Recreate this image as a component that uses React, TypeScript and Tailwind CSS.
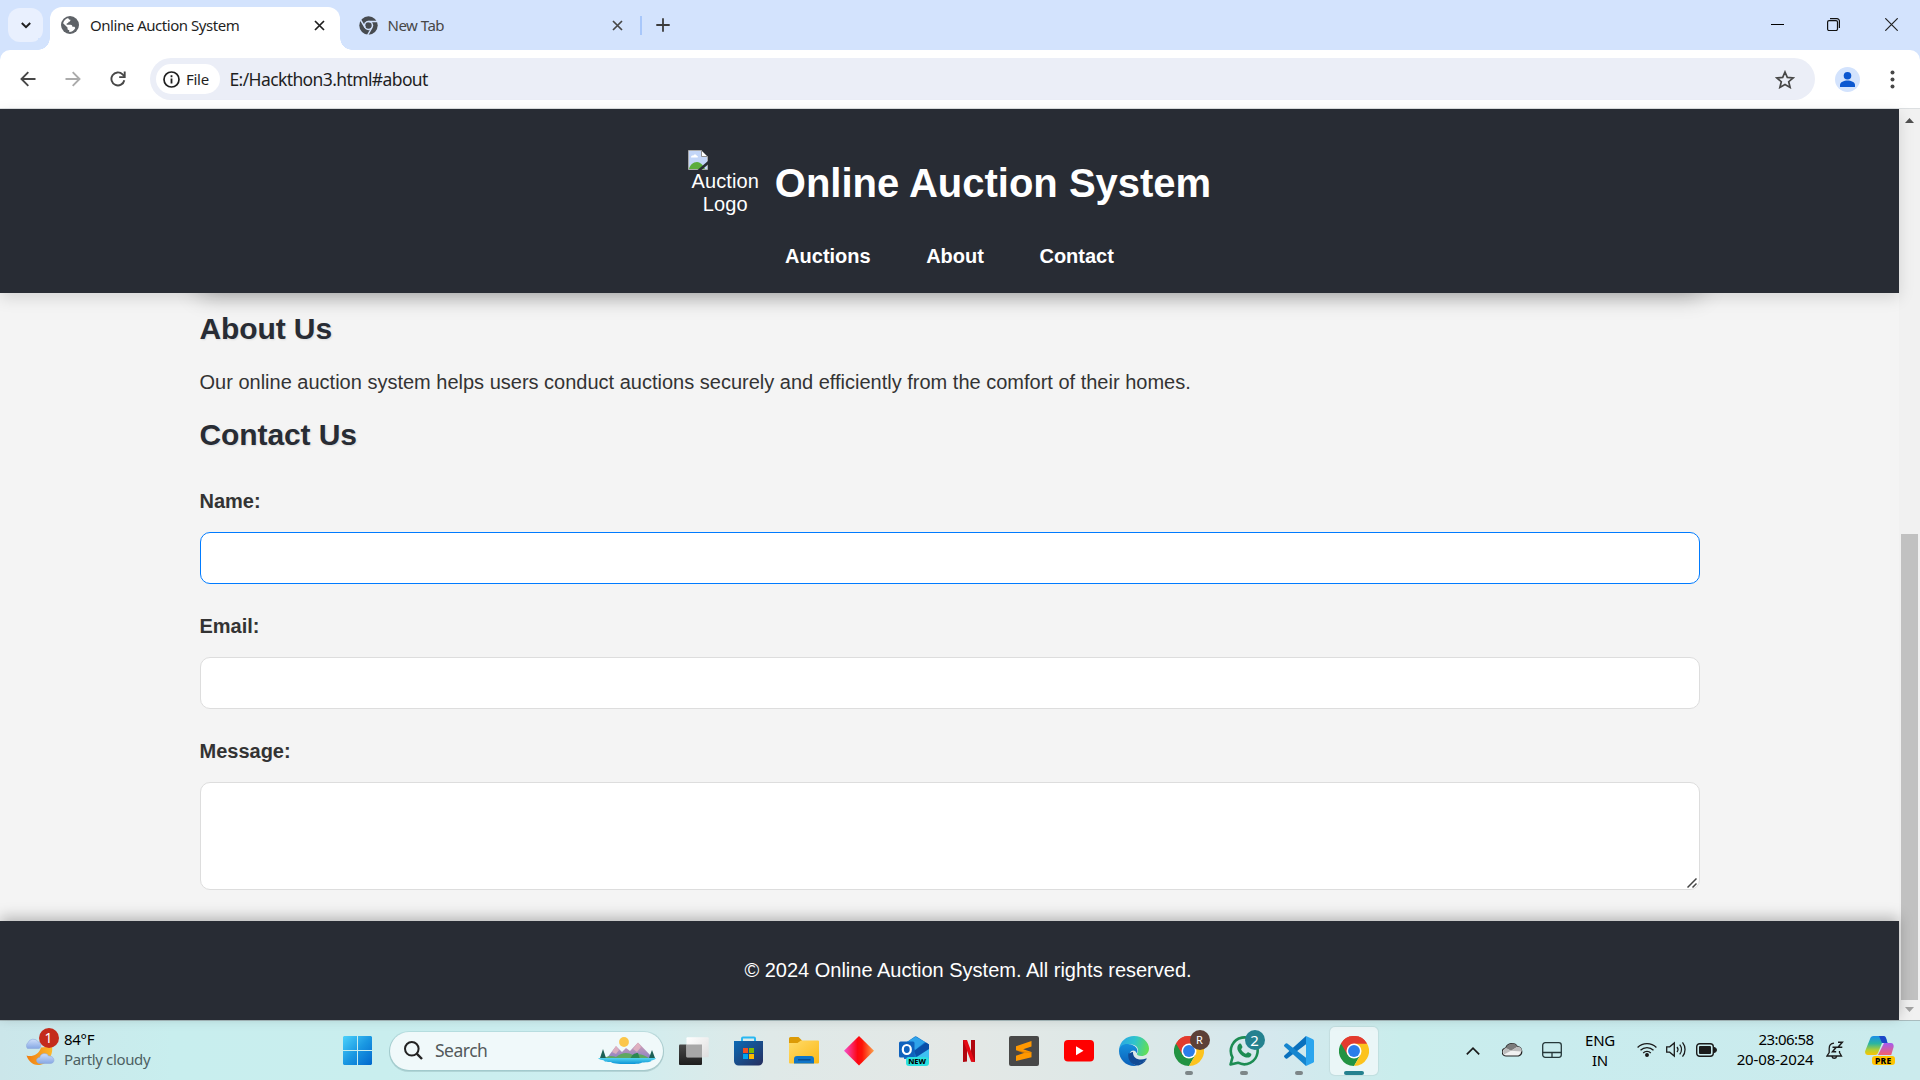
import type { ReactNode } from "react";

const UI = "font-['Noto_Sans','Open_Sans',sans-serif]";

/* ---------- Browser icons ---------- */

const CloseX = ({ color = "#1f1f1f" }: { color?: string }) => (
  <svg width="11" height="11" viewBox="0 0 11 11" fill="none" stroke={color} strokeWidth="1.7">
    <path d="M1 1l9 9M10 1l-9 9" />
  </svg>
);

const Globe = () => (
  <svg width="18" height="18" viewBox="0 0 18 18">
    <circle cx="9" cy="9" r="9" fill="#5f6368" />
    <path d="M7.2 1.9c.2 1.3 1 1.7 2.3 1.8-.1 1.3-.6 2-1.8 2.1-.3 1-1 1.6-2 1.7l-.1 1.3h3.9c1.3 0 1.9.8 1.9 1.900h1.300c1 0 1.600.6 1.500 1.600A7 7 0 0 1 8.200 16v-1.900c-1 0-1.700-.7-1.700-1.700v-.9L2.100 7.200A7.200 7.200 0 0 1 7.200 1.900z" fill="#fff" />
    <path d="M11.500 2.500c2.500 1 4.300 3.200 4.500 6-.8-1.300-1.900-1.500-3-1.600 0-1.200-.5-1.700-1.500-1.800z" fill="#5f6368" />
  </svg>
);

const ChromeMono = () => (
  <svg width="19" height="19" viewBox="0 0 19 19">
    <circle cx="9.500" cy="9.500" r="9.200" fill="#474b50" />
    <circle cx="9.500" cy="9.500" r="4.700" fill="#d3e3fd" />
    <circle cx="9.500" cy="9.500" r="3.200" fill="#474b50" />
    <g stroke="#d3e3fd" strokeWidth="1.500">
      <path d="M9.500 5.600h8.800M6.100 11.500L1.700 4.200M12.900 11.500l-4.200 7.500" />
    </g>
  </svg>
);

const ArrowBack = ({ color, flip }: { color: string; flip?: boolean }) => (
  <svg width="16" height="16" viewBox="0 0 16 16" fill="none" stroke={color} strokeWidth="1.900" className={flip ? "-scale-x-100" : ""}>
    <path d="M15.500 8H1.700M8.300 1.200L1.500 8l6.800 6.800" />
  </svg>
);

const Reload = () => (
  <svg width="16" height="16" viewBox="0 0 16 16" fill="none" stroke="#474747" strokeWidth="1.900">
    <path d="M14.300 9.200A6.500 6.500 0 1 1 12.600 3.400L14.500 5.300" />
    <path d="M14.700.5v5.600H9.200" />
  </svg>
);

/* ---------- Taskbar icons ---------- */

const ChromeLogo = () => (
  <svg width="30" height="30" viewBox="0 0 48 48">
    <path d="M24 24L3.200 12A24 24 0 0 1 44.800 12z" fill="#e33b2e" />
    <path d="M24 24L3.200 12A24 24 0 0 0 24 48l10.400-18z" fill="#229342" />
    <path d="M24 24V12h20.800A24 24 0 0 1 24 48l10.400-18z" fill="#fcc31e" />
    <path d="M3.200 12A24 24 0 0 1 44.800 12H24v12l-10.400 6z" fill="#e33b2e" />
    <circle cx="24" cy="24" r="12" fill="#fff" />
    <circle cx="24" cy="24" r="9.500" fill="#2b7de9" />
  </svg>
);

const WeatherIcon = () => (
  <svg width="31" height="31" viewBox="0 0 31 31">
    <defs>
      <linearGradient id="cloud" x1="0" y1="0" x2="0" y2="1">
        <stop offset="0" stopColor="#cfdffb" />
        <stop offset="1" stopColor="#86a8e4" />
      </linearGradient>
      <linearGradient id="moon" x1="0" y1="0" x2="1" y2="0">
        <stop offset="0" stopColor="#ef7d11" />
        <stop offset="1" stopColor="#fcb92c" />
      </linearGradient>
    </defs>
    <path d="M3.500 13.500a4 4 0 0 1 .3-5.700 6 6 0 0 1 10.500-1c3 .2 3.500 6 .7 6.700z" fill="url(#cloud)" stroke="#8fa9dc" strokeWidth=".6" />
    <path d="M2.500 20.500c5 1.500 12 0 14.500-8l11-1c1.500 8-4 18.500-14 18.500-6 0-10-5-11.500-9.500z" fill="url(#moon)" />
    <path d="M16 28.500c-4.500 0-4.500-6-.3-6 .6-4.500 7.300-5.300 8.800-1.500 6-.6 7.500 7 2 7.500z" fill="url(#cloud)" stroke="#8fa9dc" strokeWidth=".6" />
  </svg>
);

const WindowsLogo = () => (
  <svg width="29" height="29" viewBox="0 0 29 29">
    <defs>
      <linearGradient id="win" x1="0" y1="0" x2="29" y2="29" gradientUnits="userSpaceOnUse">
        <stop offset="0" stopColor="#4cd2fb" />
        <stop offset=".5" stopColor="#1a98e2" />
        <stop offset="1" stopColor="#0067cc" />
      </linearGradient>
    </defs>
    <path d="M1 0h13v14H0V1zM15 0h13l1 1v13H15zM0 15h14v14H1l-1-1zM15 15h14v13l-1 1H15z" fill="url(#win)" />
  </svg>
);

const Landscape = () => (
  <svg width="58" height="29" viewBox="0 0 58 29">
    <defs>
      <linearGradient id="mtn" x1="0" y1="0" x2="0" y2="1">
        <stop offset="0" stopColor="#d8a2b4" />
        <stop offset="1" stopColor="#8d83c4" />
      </linearGradient>
      <linearGradient id="lake" x1="0" y1="0" x2="0" y2="1">
        <stop offset="0" stopColor="#55d5ef" />
        <stop offset="1" stopColor="#0b93d6" />
      </linearGradient>
    </defs>
    <circle cx="26" cy="6" r="4.900" fill="#fbc64a" />
    <path d="M9 22l9-12 6 6 4-4 4 3 8-8.500 15 15.500z" fill="url(#mtn)" />
    <path d="M18 10l-4 6 4 2 3-4zM40 7l-5 6 4 3 4-5z" fill="#e6b6c0" opacity=".8" />
    <path d="M5 23c4-3 8-4 13-2 6-5 12-5 17-2 6-2 12 0 17 4z" fill="#5fa760" />
    <path d="M32 23c2-4 4-6 8-6l2 6z" fill="#2c8752" />
    <path d="M5 13l3 9H2zM54 14l3 8h-6z" fill="#1c6156" />
    <path d="M0 22h58c-1 2-3 2-5 2.500 2 1-4 2-9 2-1 1.500-8 1.500-16 1.500s-14-.5-15-2c-4 0-7-.5-7-1.500C4 24 1 23.500 0 22z" fill="url(#lake)" />
  </svg>
);

const TaskView = () => (
  <svg width="30" height="28" viewBox="0 0 30 28">
    <defs>
      <linearGradient id="tvd" x1="0" y1="0" x2="0" y2="1">
        <stop offset="0" stopColor="#484848" />
        <stop offset="1" stopColor="#1d1d1d" />
      </linearGradient>
      <linearGradient id="tvl" x1="0" y1="0" x2="1" y2="1">
        <stop offset="0" stopColor="#fff" />
        <stop offset="1" stopColor="#dedede" />
      </linearGradient>
    </defs>
    <rect y="7.500" width="23" height="20.500" rx="1" fill="url(#tvd)" />
    <rect x="7.500" y=".3" width="22.200" height="20" rx="1" fill="url(#tvl)" />
    <path d="M7.500 7.500H23v12.800H7.500z" fill="#a7a7a7" />
  </svg>
);

const Store = () => (
  <svg width="29" height="30" viewBox="0 0 29 30">
    <defs>
      <linearGradient id="store" x1="0" y1="0" x2="1" y2="1">
        <stop offset="0" stopColor="#0b6ab5" />
        <stop offset="1" stopColor="#272e5e" />
      </linearGradient>
    </defs>
    <path d="M8 6V2.500a1 1 0 0 1 1-1h11a1 1 0 0 1 1 1V6" fill="none" stroke="#29b8f2" strokeWidth="2" />
    <path d="M0 5h29v20a4.500 4.500 0 0 1-4.500 4.500h-20A4.500 4.500 0 0 1 0 25z" fill="url(#store)" />
    <path d="M9 12h5v5H9z" fill="#f25022" />
    <path d="M15 12h5v5h-5z" fill="#7fba00" />
    <path d="M9 18h5v5H9z" fill="#00a4ef" />
    <path d="M15 18h5v5h-5z" fill="#ffb900" />
  </svg>
);

const Explorer = () => (
  <svg width="30" height="27" viewBox="0 0 30 27">
    <defs>
      <linearGradient id="fold" x1="0" y1="0" x2="1" y2="1">
        <stop offset="0" stopColor="#ffdb6a" />
        <stop offset="1" stopColor="#fbb916" />
      </linearGradient>
    </defs>
    <path d="M0 1.500A1.500 1.500 0 0 1 1.500 0h8L13 3.500 11 8H0z" fill="#dc9a06" />
    <path d="M0 6h8.500L12 3.500h17a1 1 0 0 1 1 1v21a1 1 0 0 1-1 1H1a1 1 0 0 1-1-1z" fill="url(#fold)" />
    <path d="M5 26.500V22a3 3 0 0 1 3-3h14a3 3 0 0 1 3 3v4.500z" fill="#0f75c8" />
    <path d="M9 22.800h12.500" stroke="#0a4a8a" strokeWidth="1.400" />
  </svg>
);

const Diamond = () => (
  <svg width="30" height="30" viewBox="0 0 30 30">
    <defs>
      <linearGradient id="dia" x1="0" y1="0" x2="1" y2="0">
        <stop offset="0" stopColor="#f650cf" />
        <stop offset=".45" stopColor="#fd0612" />
        <stop offset=".6" stopColor="#fd1307" />
        <stop offset="1" stopColor="#fba34d" />
      </linearGradient>
    </defs>
    <path d="M15 0l15 14.700L15 29.500 0 14.700z" fill="url(#dia)" />
  </svg>
);

const Outlook = () => (
  <svg width="30" height="29" viewBox="0 0 30 29">
    <path d="M5 8L15.500.8a2 2 0 0 1 2.400 0L30 8.500V23H5z" fill="#1275cb" />
    <path d="M8 6l8.500-5.300L26 6l-10 8z" fill="#2fa3ea" />
    <path d="M15 15L27 6.500l3 2V14l-12 8z" fill="#0b4fa8" />
    <path d="M16 22l14-9v8a4 4 0 0 1-4 4H16z" fill="#3ec1f2" />
    <rect y="5.500" width="15.500" height="16" rx="1.500" fill="#0f62bd" />
    <ellipse cx="7.800" cy="13.500" rx="4" ry="4.500" fill="none" stroke="#fff" strokeWidth="2.200" />
  </svg>
);

const Netflix = () => (
  <svg width="12" height="23" viewBox="0 0 12 23">
    <path d="M0 1h4v21.500L0 23zM8 1h4v22l-4-.5z" fill="#b1060f" />
    <path d="M0 1h4l8 22-4-.5z" fill="#e50914" />
  </svg>
);

const Sublime = () => (
  <svg width="30" height="30" viewBox="0 0 30 30">
    <rect width="30" height="30" rx="2" fill="#484848" />
    <path d="M7 10.200L22.500 5v5.500l-8.300 2.800 8.300 2.700v5.300L7 25v-5.300l8.500-2.900L7 14.200z" fill="#ff9800" />
    <path d="M7 14.200l15.500 1.800v.8L14 17.200z" fill="#d97c00" opacity=".5" />
  </svg>
);

const YouTube = () => (
  <svg width="30" height="22" viewBox="0 0 30 22">
    <rect width="30" height="21.500" rx="4" fill="#f00" />
    <path d="M12 6.300l7.500 4.500-7.500 4.500z" fill="#fff" />
  </svg>
);

const Edge = () => (
  <svg width="30" height="30" viewBox="0 0 30 30">
    <defs>
      <linearGradient id="ed1" x1="0" y1=".3" x2="1" y2=".5">
        <stop offset="0" stopColor="#2aa5e6" />
        <stop offset=".5" stopColor="#2fc4cc" />
        <stop offset="1" stopColor="#62df55" />
      </linearGradient>
      <linearGradient id="ed2" x1="0" y1="0" x2="0" y2="1">
        <stop offset="0" stopColor="#1590dd" />
        <stop offset="1" stopColor="#0b5fb8" />
      </linearGradient>
    </defs>
    <path d="M0 14C.8 5 7.500 0 15 0c9 0 15 6.500 15 12.500 0 5-3.800 7.500-7.600 7.500-3.200 0-4.900-1.200-4.400-2.500 2.500-3.500.5-8-5-9C7 8 2 10 0 14z" fill="url(#ed1)" />
    <path d="M0 15c0-5 5-7.500 10-6.800 5 .6 8.400 3.200 8.400 6.800 0 1-.3 1.600-.8 2.300-.5-3-5-4.300-6.600-.3C9 23 13 29 19 29.500 9 32 0 24.500 0 15z" fill="url(#ed2)" />
    <path d="M10.500 18c-1 6 4.500 9.500 9.500 9 3-.3 6-2 7.600-3.800.5-.6 0-1-.6-.7-7 3-13.500-.5-13-6.500-2 0-3.300 1-3.500 2z" fill="#0f4a96" />
    <path d="M9.500 17C8 24 13 29.500 19.500 29.500c3.600-1 6-3 7.800-5.500-6 4.500-16.300 3-15.800-6z" fill="#114a95" />
  </svg>
);

const WhatsApp = () => (
  <svg width="30" height="30" viewBox="0 0 30 30">
    <path d="M1.500 28.500l2-7.200A13.400 13.400 0 1 1 9 26.700z" fill="none" stroke="#1d8c53" strokeWidth="2.600" strokeLinejoin="round" />
    <path d="M10 8c1-.8 2-.5 2.400.5l1 2.300c.3 1-1.200 1.800-1.200 2.600 1 2 2.500 3.500 4.600 4.300.8 0 1.600-1.900 2.500-1.500l2.500 1.200c1 .5.5 2.200-.3 3-1.500 1.500-3.700 1.500-6 .5-3.500-1.500-5.700-4-7-7.200C8 11.500 8.500 9.200 10 8z" fill="#1d8c53" />
  </svg>
);

const VSCode = () => (
  <svg width="30" height="30" viewBox="0 0 30 30">
    <path d="M22 0l7 3.200a1.800 1.800 0 0 1 1 1.600v20.400a1.800 1.800 0 0 1-1 1.600L22 30z" fill="#2ba5ee" />
    <path d="M22 0v8.200L3.300 22.500a1.200 1.200 0 0 1-1.600 0L.4 21.200a1.200 1.200 0 0 1 0-1.700z" fill="#0a70bd" />
    <path d="M22 30v-8.200L3.300 7.500a1.200 1.200 0 0 0-1.600 0L.4 8.800a1.200 1.200 0 0 0 0 1.700z" fill="#1585cf" />
  </svg>
);

const Copilot = () => (
  <svg width="30" height="28" viewBox="0 0 30 28">
    <defs>
      <linearGradient id="cp1" x1="0" y1="0" x2="0" y2="1">
        <stop offset="0" stopColor="#1b8ee8" />
        <stop offset=".4" stopColor="#2bb5a0" />
        <stop offset=".75" stopColor="#b9cf2e" />
        <stop offset="1" stopColor="#fcc400" />
      </linearGradient>
      <linearGradient id="cp2" x1="0" y1="0" x2="0" y2="1">
        <stop offset="0" stopColor="#a55bf0" />
        <stop offset="1" stopColor="#f4606e" />
      </linearGradient>
    </defs>
    <path d="M9 0h9a3 3 0 0 1 3 2l1.500 5H17l-4 10a3 3 0 0 1-3 2H3c-2 0-3.400-2-2.800-4L5 3a4 4 0 0 1 4-3z" fill="url(#cp1)" />
    <path d="M14 0h4a3 3 0 0 1 3 2l1.500 5H17z" fill="#1c46c8" />
    <path d="M19 7h7c2 0 3 2 2.600 4l-2.400 8H13z" fill="url(#cp2)" />
  </svg>
);

const Badge = ({ className, children }: { className: string; children: ReactNode }) => (
  <span className={`absolute flex h-5 w-5 items-center justify-center rounded-full text-white ${className}`}>{children}</span>
);

const Slot = ({ icon, running, active, badge }: { icon: ReactNode; running?: boolean; active?: boolean; badge?: ReactNode }) => (
  <div className="flex w-[55px] shrink-0 justify-center">
    <div className={`relative flex h-12 w-12 items-center justify-center rounded-[5px] ${active ? "bg-[#eaf6f7] shadow-[0_0_1px_1px_rgba(0,0,0,0.06)]" : ""}`}>
      {icon}
      {badge}
      {running && <span className="absolute bottom-0 h-1 w-2 rounded-full bg-[#7d8688]" />}
      {active && <span className="absolute bottom-0 h-1 w-5 rounded-full bg-[#24818f]" />}
    </div>
  </div>
);

/* ---------- Sections ---------- */

const TabStrip = () => (
  <div className="flex h-[50px] shrink-0 bg-[#d3e3fd]">
    <div className="mt-2 ml-2 flex h-[34px] w-[35px] items-center justify-center rounded-[12px] bg-[#e9f0fe]">
      <svg width="10" height="7" viewBox="0 0 10 7" fill="none" stroke="#1f1f1f" strokeWidth="2">
        <path d="M.8 1L5 5.200 9.200 1" />
      </svg>
    </div>
    <div className="relative mt-[7px] ml-[7px] flex h-[43px] w-[290px] items-center rounded-t-[12px] bg-white pr-[15px] pb-[16px] pl-[11px] pt-[9px]">
      <span className="absolute bottom-0 -left-3 h-3 w-3 bg-[radial-gradient(circle_at_0_0,#d3e3fd_11.5px,white_12px)]" />
      <span className="absolute -right-3 bottom-0 h-3 w-3 bg-[radial-gradient(circle_at_100%_0,#d3e3fd_11.5px,white_12px)]" />
      <Globe />
      <span className="ml-[11px] flex-1 text-[15px] tracking-[-0.460px] text-[#1f1f1f]">Online Auction System</span>
      <CloseX />
    </div>
    <div className="mt-[7px] flex h-[36px] w-[300px] items-center pr-[17px] pl-[18.5px] pb-[9px] pt-[9px]">
      <ChromeMono />
      <span className="ml-[10px] flex-1 text-[15px] tracking-[-0.5px] text-[#474747]">New Tab</span>
      <CloseX color="#474747" />
    </div>
    <span className="mt-4 h-[19px] w-[2px] bg-[#a8c7fa]" />
    <svg className="mt-[18px] ml-[14px]" width="14" height="14" viewBox="0 0 14 14" stroke="#3c3c3c" strokeWidth="1.800">
      <path d="M7 .3v13.400M.3 7h13.400" />
    </svg>
    <div className="ml-auto flex items-start pt-[18px] pr-[22px]">
      <svg width="13" height="13" viewBox="0 0 13 13" stroke="#000" strokeWidth="1">
        <path d="M0 6.500h13" />
      </svg>
      <svg className="ml-[43px]" width="13" height="13" viewBox="0 0 13 13" fill="none" stroke="#111" strokeWidth="1.200">
        <rect x=".6" y="2.600" width="9.900" height="9.900" rx="1.500" />
        <path d="M3 .6h7a2.400 2.400 0 0 1 2.400 2.400v7" />
      </svg>
      <svg className="ml-[45px]" width="13" height="13" viewBox="0 0 13 13" stroke="#222" strokeWidth="1.200">
        <path d="M.3.300l12.400 12.400M12.700.300L.3 12.700" />
      </svg>
    </div>
  </div>
);

const Toolbar = () => (
  <div className="shrink-0 bg-[#d3e3fd]">
    <div className="flex h-[59px] items-center rounded-t-[10px] border-b border-[#dcdfe1] bg-white pl-[19.500px]">
      <ArrowBack color="#474747" />
      <span className="ml-[29px]">
        <ArrowBack color="#ababab" flip />
      </span>
      <span className="ml-[29px]">
        <Reload />
      </span>
      <div className="ml-[24.500px] flex h-[42px] w-[1665px] items-center rounded-full bg-[#ebeef7] pr-5 pl-[6px]">
        <div className="flex h-[30px] w-16 items-center rounded-full bg-white pl-[6.500px]">
          <svg width="17" height="17" viewBox="0 0 17 17" fill="none" stroke="#1f1f1f">
            <circle cx="8.500" cy="8.500" r="7.500" strokeWidth="1.700" />
            <path d="M8.500 7.500v5M8.500 4.300v1.900" strokeWidth="1.800" />
          </svg>
          <span className="ml-[6.500px] text-[15px] tracking-[-0.3px] text-[#1f1f1f]">File</span>
        </div>
        <span className="ml-[9.500px] flex-1 text-[17.500px] tracking-[-0.610px] text-[#1f1f1f]">E:/Hackthon3.html#about</span>
        <svg width="20" height="19" viewBox="0 0 20 19" fill="none" stroke="#474747" strokeWidth="1.700">
          <path d="M10 2l2.300 5.400 5.900.5-4.500 3.800 1.400 5.700-5.100-3-5.100 3 1.400-5.700L1.800 7.900l5.900-.5z" />
        </svg>
      </div>
      <svg className="ml-5" width="25" height="25" viewBox="0 0 25 25">
        <circle cx="12.500" cy="12.500" r="12.500" fill="#d3e3fd" />
        <circle cx="12.500" cy="8.800" r="3.800" fill="#0b57d0" />
        <path d="M5 20v-2c0-3 4-4.500 7.500-4.500S20 15 20 18v2z" fill="#0b57d0" />
      </svg>
      <svg className="ml-[30px]" width="5" height="19" viewBox="0 0 5 19" fill="#474747">
        <circle cx="2.500" cy="2.500" r="2" />
        <circle cx="2.500" cy="9.500" r="2" />
        <circle cx="2.500" cy="16.500" r="2" />
      </svg>
    </div>
  </div>
);

const SiteHeader = () => (
  <header className="relative z-10 flex h-[184px] shrink-0 flex-col items-center bg-[#282c34] text-white shadow-[0_5px_15px_rgba(0,0,0,0.13)]">
    <div className="mt-[41px] flex h-[75px]">
      <div className="w-[75px] text-center text-[20px] leading-[23px] tracking-[0.1px]">
        <svg width="20" height="20" viewBox="0 0 20 20">
          <path d="M.5.500h13l6 6v13H.5z" fill="#c3d6f8" stroke="#a9a9a9" />
          <path d="M13.500.500v6h6z" fill="#fff" stroke="#8f8f8f" />
          <path d="M3 7.200c0-2 2-2 2.300-1.500.5-2 3.500-1.500 3.500.2 1.700 0 1.500 1.500.5 1.500H3z" fill="#fff" />
          <path d="M1 19c1-4 4-7 8-7 4 .5 6 3 8 7z" fill="#5aac3c" />
          <path d="M9.500 20L20 11v3.500L13.500 20z" fill="#282c34" />
        </svg>
        <div>Auction</div>
        <div>Logo</div>
      </div>
      <h1 className="mt-[10px] ml-[12px] text-[40px] leading-[46px] font-bold whitespace-nowrap">Online Auction System</h1>
    </div>
    <nav className="mt-5 flex gap-[55.500px] text-[20px] leading-[23px] font-bold">
      <a>Auctions</a>
      <a>About</a>
      <a>Contact</a>
    </nav>
  </header>
);

const Heading = ({ children }: { children: ReactNode }) => (
  <h2 className="-ml-[0.5px] text-[30px] leading-[34px] font-bold tracking-[-0.1px] text-[#282c34] [text-shadow:1px_1px_2px_rgba(0,0,0,0.1)]">{children}</h2>
);

const Label = ({ children }: { children: ReactNode }) => (
  <div className="mb-[19px] -ml-[0.5px] text-[20px] leading-[23px] font-bold text-[#333]">{children}</div>
);

const MainContent = () => (
  <main className="relative flex-1 overflow-hidden bg-[#f4f4f4] pt-[19px] pr-[199px] pl-[200px] text-[#333]">
    <div className="absolute -top-[60px] left-[200px] h-[56px] w-[1500px] shadow-[0_5px_25px_rgba(0,0,0,0.3)]" />
    <Heading>About Us</Heading>
    <p className="mt-[25px] mb-6 -ml-[0.5px] text-[20px] leading-[23px]">
      Our online auction system helps users conduct auctions securely and efficiently from the comfort of their homes.
    </p>
    <Heading>Contact Us</Heading>
    <form className="mt-[38px]">
      <Label>Name:</Label>
      <div className="mb-[31px] h-[52px] rounded-[10px] border border-[#007bff] bg-white" />
      <Label>Email:</Label>
      <div className="mb-[31px] h-[52px] rounded-[10px] border border-[#ddd] bg-white" />
      <Label>Message:</Label>
      <div className="flex h-[108px] items-end justify-end rounded-[10px] border border-[#ddd] bg-white pr-[2px] pb-[1px]">
        <svg width="10" height="10" viewBox="0 0 10 10" stroke="#444" strokeWidth="1.500">
          <path d="M.5 9.500l9-9M5.500 9.500l4-4" />
        </svg>
      </div>
    </form>
  </main>
);

const Scrollbar = () => (
  <div className="flex w-[21px] shrink-0 flex-col items-center bg-[#f1f1f1]">
    <svg className="mt-[9px]" width="9" height="5" viewBox="0 0 9 5">
      <path d="M0 5l4.500-5L9 5z" fill="#505050" />
    </svg>
    <div className="mt-[411px] h-[466px] w-[17px] bg-[#c1c1c1]" />
    <svg className="mt-[7px]" width="9" height="5" viewBox="0 0 9 5">
      <path d="M0 0h9L4.500 5z" fill="#a3a3a3" />
    </svg>
  </div>
);

const Taskbar = () => (
  <div className="flex h-[60px] shrink-0 items-center border-t border-[#a9bcbe] bg-[linear-gradient(90deg,#cbe6ea_0%,#c8eeee_9%,#c9eeee_20%,#cdeef0_31%,#dfe9e8_40%,#e4e8e6_50%,#dde8e7_58%,#d5e8ee_66%,#c9edec_73%,#c9ecee_80%,#cbebed_100%)] text-[15px] leading-5 text-black">
    <div className="relative ml-6 flex h-[40px] w-[40px] items-center">
      <WeatherIcon />
      <Badge className="top-[-3px] left-[14.500px] bg-[#c42b1c] text-[14px]">1</Badge>
    </div>
    <div className="w-[279px] pb-1">
      <div className="tracking-[-0.3px]">84°F</div>
      <div className="tracking-[-0.350px] text-[#4d6163]">Partly cloudy</div>
    </div>
    <WindowsLogo />
    <div className="ml-[18px] flex h-[38px] w-[273px] items-center rounded-full bg-[#f0f9fa] pr-[7px] pl-[14px] shadow-[0_0_0_1px_rgba(120,170,175,0.25),0_1px_0_1px_rgba(100,140,145,0.25)]">
      <svg width="19" height="19" viewBox="0 0 19 19" fill="none" stroke="#222" strokeWidth="2">
        <circle cx="7.800" cy="7.800" r="6.800" />
        <path d="M12.700 12.700l5.300 5.300" strokeWidth="2.400" />
      </svg>
      <span className="ml-3 flex-1 pb-[2px] text-[17.500px] tracking-[-0.5px] text-[#53595b]">Search</span>
      <Landscape />
    </div>
    <div className="ml-[3px] flex">
      <Slot icon={<TaskView />} />
      <Slot icon={<Store />} />
      <Slot icon={<Explorer />} />
      <Slot icon={<Diamond />} />
      <Slot
        icon={<Outlook />}
        badge={<span className="absolute right-[9px] bottom-[9px] rounded-[3px] bg-[#2be0e0] px-[2.500px] text-[7.500px] leading-[9px] font-extrabold">NEW</span>}
      />
      <Slot icon={<Netflix />} />
      <Slot icon={<Sublime />} />
      <Slot icon={<YouTube />} />
      <Slot icon={<Edge />} />
      <Slot icon={<ChromeLogo />} running badge={<Badge className="top-[3px] left-[25px] bg-[#5d4037] text-[11px] text-[#d7ccc8]">R</Badge>} />
      <Slot icon={<WhatsApp />} running badge={<Badge className="top-[3px] left-[25px] bg-[#24818f] text-[15px]">2</Badge>} />
      <Slot icon={<VSCode />} running />
      <Slot icon={<ChromeLogo />} active />
    </div>
    <svg className="ml-[84.500px]" width="14" height="8" viewBox="0 0 14 8" fill="none" stroke="#1b1b1b" strokeWidth="1.700">
      <path d="M.8 7.300L7 1.200l6.200 6.100" />
    </svg>
    <svg className="-mt-[2px] ml-[22px]" width="21" height="15" viewBox="0 0 21 15">
      <path d="M4.500 14A4 4 0 0 1 3.800 6 6.500 6.500 0 0 1 15.500 4.700 4.800 4.800 0 0 1 16.500 14z" fill="#f1f1f1" stroke="#222" strokeWidth="1.200" />
      <path d="M3.800 6A6.500 6.500 0 0 1 15.500 4.700L9 8.800z" fill="#7b7b7b" />
      <path d="M9 8.800l6.500-4c3 0 4.500 2 4.400 4.700z" fill="#bcbcbc" />
      <path d="M2 12.500l7-3.700L3.800 6C1 7 .5 10.500 2 12.500z" fill="#bcbcbc" />
    </svg>
    <svg className="-mt-[2px] ml-[19px]" width="20" height="16" viewBox="0 0 20 16" fill="none" stroke="#26383a" strokeWidth="1.300">
      <rect x=".7" y=".7" width="18.600" height="14.600" rx="2.500" />
      <path d="M.7 10.500h18.600M10 10.500v5" />
    </svg>
    <div className="ml-[19.500px] w-[38px] pb-[2px] text-center tracking-[-0.3px]">
      <div>ENG</div>
      <div>IN</div>
    </div>
    <svg className="-mt-[2px] ml-[17.500px]" width="20" height="15" viewBox="0 0 20 15" fill="none" stroke="#1b1b1b" strokeWidth="1.300">
      <path d="M.6 5.500a13.300 13.300 0 0 1 18.800 0M3.500 8.300a9.200 9.200 0 0 1 13 0M6.200 11a5.400 5.400 0 0 1 7.600 0" />
      <circle cx="10" cy="13" r="1.300" fill="#1b1b1b" />
    </svg>
    <svg className="-mt-[2px] ml-[9px]" width="21" height="17" viewBox="0 0 21 17" fill="none" stroke="#1b1b1b" strokeWidth="1.300">
      <path d="M.7 5.800h3L8.300 2v13l-4.600-3.800h-3zM11 6a4 4 0 0 1 0 5M13.700 3.700a7.500 7.500 0 0 1 0 9.600M16.500 1.300a11.500 11.500 0 0 1 0 14.400" />
    </svg>
    <svg className="-mt-[1px] ml-[9px]" width="21" height="14" viewBox="0 0 21 14">
      <rect x=".7" y=".7" width="16.600" height="12.600" rx="3" fill="none" stroke="#1b1b1b" strokeWidth="1.400" />
      <rect x="3" y="3" width="12" height="8" rx="1" fill="#1b1b1b" />
      <path d="M18 4.500a2.500 2.500 0 0 1 0 5z" fill="#1b1b1b" stroke="#1b1b1b" />
    </svg>
    <div className="ml-[10px] w-[87px] pb-1 text-right whitespace-nowrap">
      <div className="tracking-[-0.550px]">23:06:58</div>
      <div className="tracking-[-0.150px]">20-08-2024</div>
    </div>
    <svg className="ml-[12px]" width="18" height="19" viewBox="0 0 18 19" fill="none" stroke="#1b1b1b" strokeWidth="1.300">
      <path d="M8 2.200C4.800 2.500 3.200 4.800 3.200 7.500v4L1 15h14.500l-2-3.500V10M6 15.500c.5 2.300 4 2.300 4.600 0" />
      <path d="M6.500 6.200h3.700l-3.700 4.500h3.700M12 1.200h4.300L12 6.300h4.300" strokeWidth="1.500" />
    </svg>
    <div className="relative ml-[21px] h-[29px] w-[30px]">
      <Copilot />
      <span className="absolute right-0 bottom-0 rounded-[3px] bg-[#ffc400] px-[3px] text-[8.500px] leading-[9px] font-extrabold tracking-[0.3px]">PRE</span>
    </div>
  </div>
);

export default function App() {
  return (
    <div className={`flex h-[1080px] w-[1920px] flex-col overflow-hidden ${UI}`}>
      <TabStrip />
      <Toolbar />
      <div className="flex min-h-0 flex-1">
        <div className="flex w-[1899px] flex-col font-['Liberation_Sans',Arial,sans-serif]">
          <SiteHeader />
          <MainContent />
          <footer className="relative z-10 h-[99px] shrink-0 bg-[#282c34] pt-[38px] pl-[37px] text-center text-[20px] leading-[23px] text-white shadow-[0_-4px_13px_rgba(0,0,0,0.25)]">
            © 2024 Online Auction System. All rights reserved.
          </footer>
        </div>
        <Scrollbar />
      </div>
      <Taskbar />
    </div>
  );
}
